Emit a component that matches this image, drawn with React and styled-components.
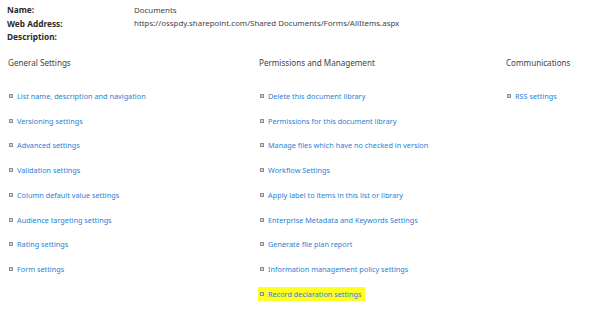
import React from "react";
import styled, { createGlobalStyle } from "styled-components";

const GlobalStyle = createGlobalStyle`
    body {
        margin: 0;
        background: #ffffff;
        font-family: "Noto Sans", "Open Sans", sans-serif;
    }
`;

const info = [
    { label: "Name:", value: "Documents" },
    { label: "Web Address:", value: "https://osspdy.sharepoint.com/Shared Documents/Forms/AllItems.aspx" },
    { label: "Description:", value: "" },
];

const columns = [
    {
        title: "General Settings",
        links: [
            "List name, description and navigation",
            "Versioning settings",
            "Advanced settings",
            "Validation settings",
            "Column default value settings",
            "Audience targeting settings",
            "Rating settings",
            "Form settings",
        ],
    },
    {
        title: "Permissions and Management",
        links: [
            "Delete this document library",
            "Permissions for this document library",
            "Manage files which have no checked in version",
            "Workflow Settings",
            "Apply label to items in this list or library",
            "Enterprise Metadata and Keywords Settings",
            "Generate file plan report",
            "Information management policy settings",
            "Record declaration settings",
        ],
        highlight: "Record declaration settings",
    },
    {
        title: "Communications",
        links: ["RSS settings"],
    },
];

export default function App() {
    return (
        <Page>
            <GlobalStyle />
            <InfoTable>
                {info.map((row) => (
                    <React.Fragment key={row.label}>
                        <Label>{row.label}</Label>
                        <Value>{row.value}</Value>
                    </React.Fragment>
                ))}
            </InfoTable>
            <Columns>
                {columns.map((col) => (
                    <Column key={col.title}>
                        <Heading>{col.title}</Heading>
                        <LinkList>
                            {col.links.map((link) => (
                                <LinkRow key={link}>
                                    <Item $highlighted={link === col.highlight}>
                                        <Bullet />
                                        <LinkText href="#">{link}</LinkText>
                                    </Item>
                                </LinkRow>
                            ))}
                        </LinkList>
                    </Column>
                ))}
            </Columns>
        </Page>
    );
}

const Page = styled.div`
    width: 602px;
    height: 309px;
    padding: 3px 0 0 7px;
    box-sizing: border-box;
    overflow: hidden;
`;

const InfoTable = styled.div`
    display: grid;
    grid-template-columns: 127px auto;
    grid-auto-rows: 13.5px;
    align-items: center;
`;

const Label = styled.div`
    font-size: 8.3px;
    font-weight: 700;
    color: #2b2b2b;
`;

const Value = styled.div`
    font-size: 7.9px;
    color: #444444;
`;

const Columns = styled.div`
    display: grid;
    grid-template-columns: 251px 247px auto;
    margin-top: 12px;
    padding-left: 1px;
`;

const Column = styled.div`
    display: flex;
    flex-direction: column;
`;

const Heading = styled.div`
    font-size: 8.1px;
    color: #444444;
    height: 14px;
    line-height: 14px;
`;

const LinkList = styled.div`
    display: flex;
    flex-direction: column;
    margin-top: 14px;
`;

const LinkRow = styled.div`
    height: 24.75px;
    display: flex;
    align-items: center;
`;

const Item = styled.div`
    display: inline-flex;
    align-items: center;
    gap: 4px;
    height: 14px;
    padding: 0 4px 0 1px;
    margin-left: -1px;
    background: ${({ $highlighted }) => ($highlighted ? "#ffff22" : "transparent")};
`;

const Bullet = styled.span`
    width: 2px;
    height: 2px;
    border: 1px solid #8f8f8f;
    background: #d4d4d4;
    box-sizing: content-box;
    flex: none;
    margin-left: 1px;
`;

const LinkText = styled.a`
    font-size: 7.3px;
    color: #2a7fd4;
    text-decoration: none;
    white-space: nowrap;
`;
